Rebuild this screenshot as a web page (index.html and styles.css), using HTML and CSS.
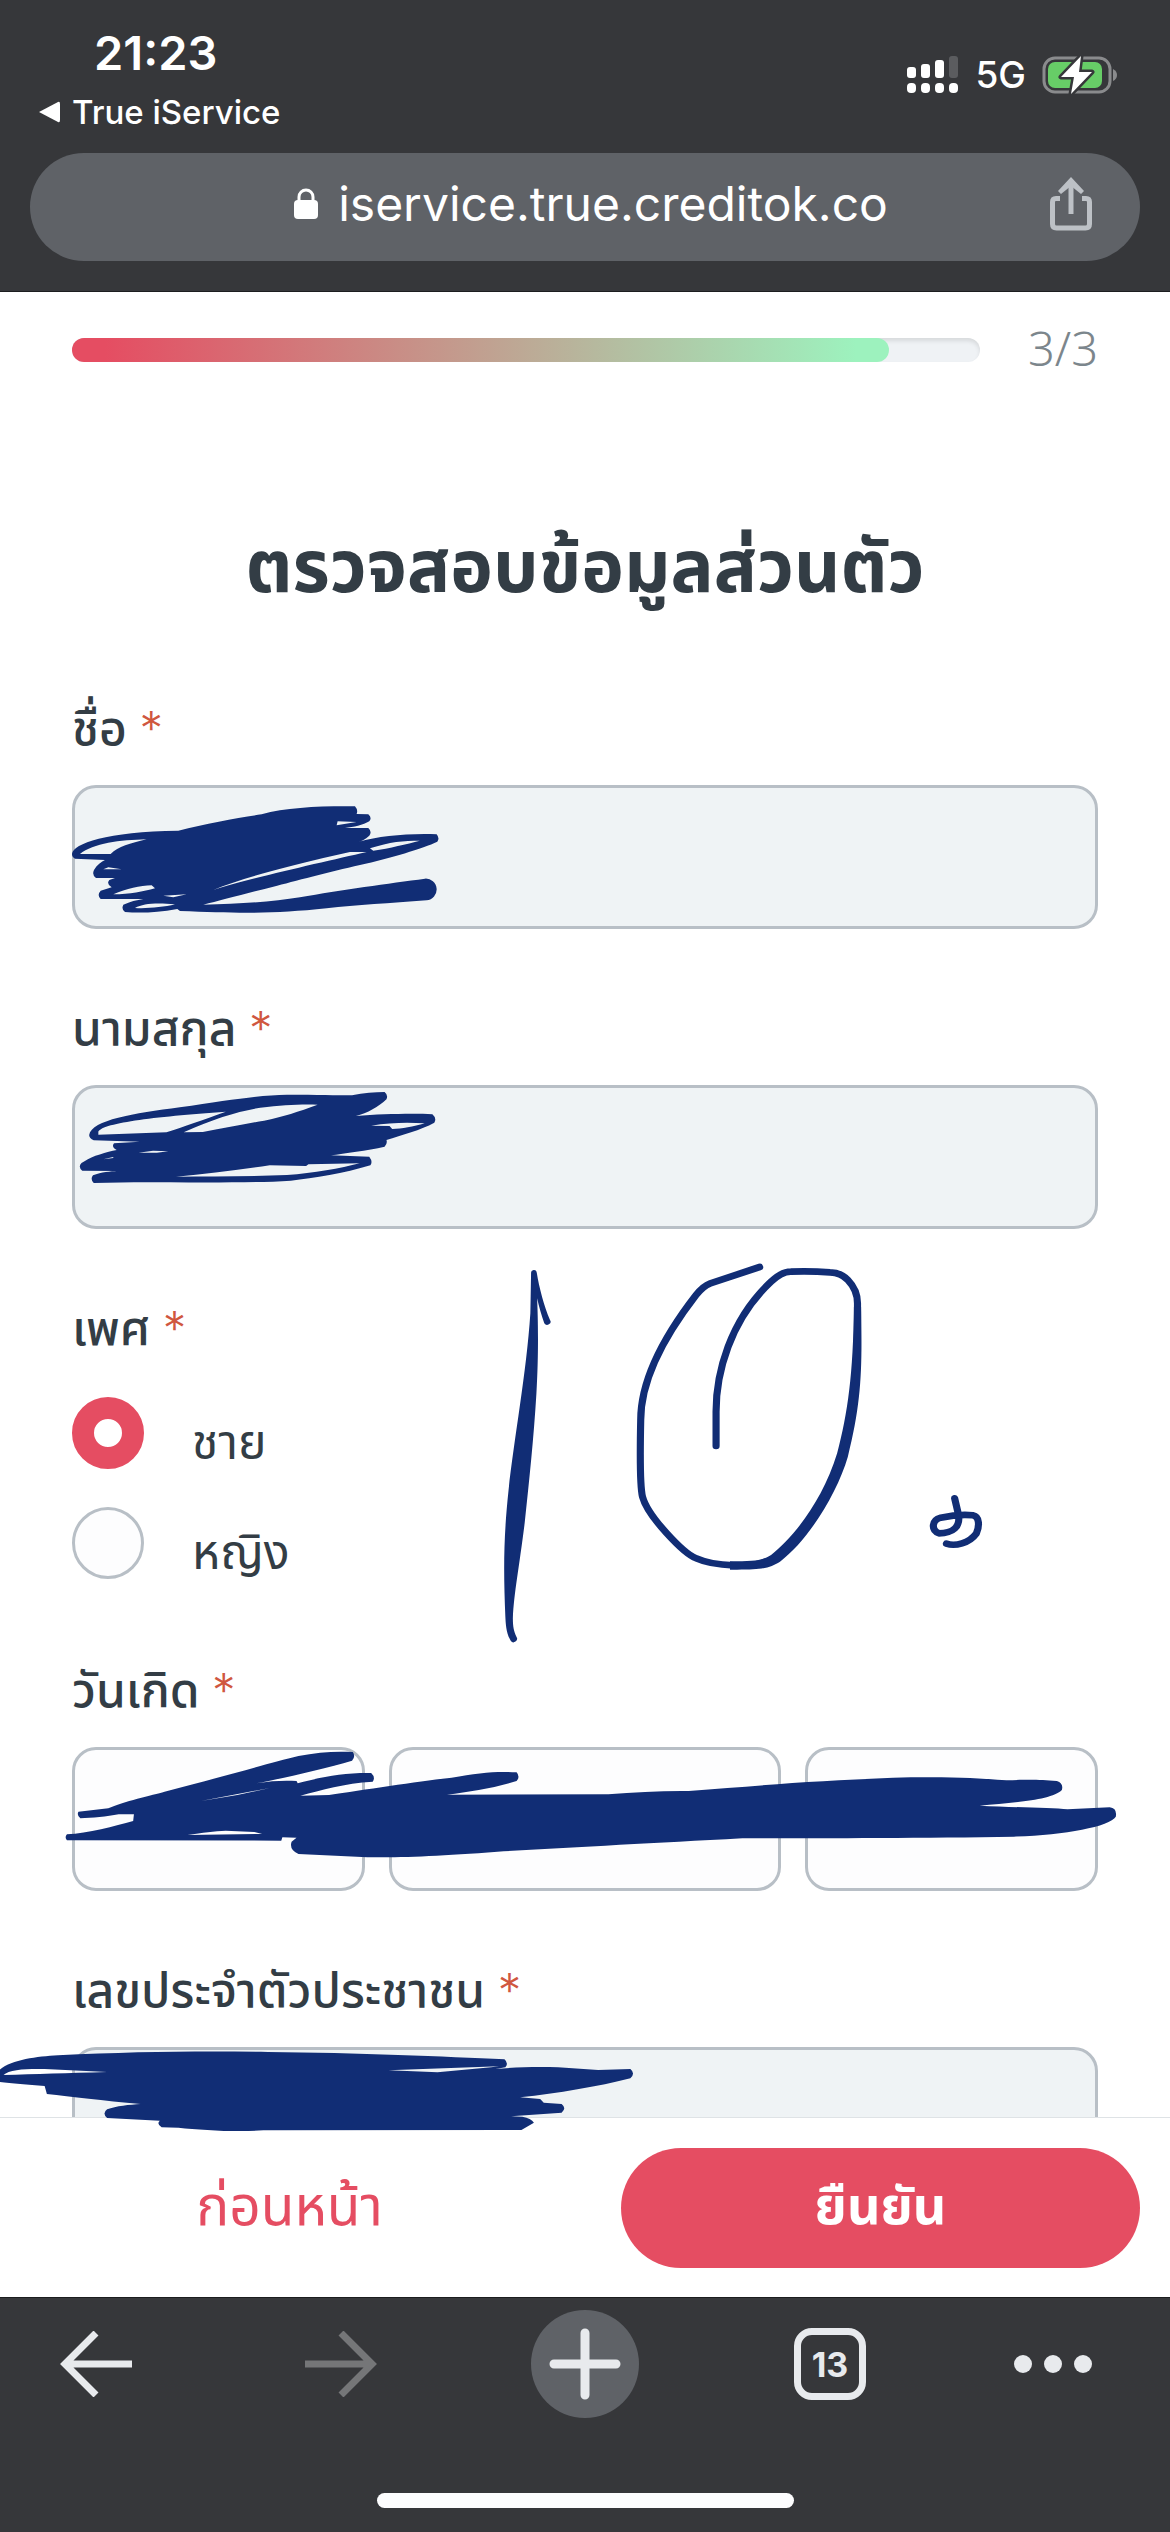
FILE: index.html
```html
<!DOCTYPE html>
<html lang="th">

<head>
  <meta charset="UTF-8" />
  <meta name="viewport" content="width=device-width, initial-scale=1" />
  <title>True iService</title>
  <link rel="stylesheet" href="styles.css">
</head>

<body>
  <header class="browser-top">
    <div class="status-bar">
      <div class="status-left">
        <span class="clock">21:23</span>
        <a class="back-app" href="#">
          <svg width="22" height="22" viewBox="0 0 22 22" aria-hidden="true">
            <path d="M1 11 20 1Q22 0 22 3V19Q22 22 20 21Z" fill="#fff" />
          </svg>
          True iService
        </a>
      </div>
      <div class="status-right">
        <svg width="52" height="38" viewBox="0 0 52 38" aria-hidden="true">
          <g fill="#fff">
            <rect x="0" y="11" width="9" height="11" rx="3" />
            <rect x="14" y="8" width="9" height="14" rx="3" />
            <rect x="28" y="4" width="9" height="18" rx="3" />
            <rect x="42" y="0" width="9" height="22" rx="3" fill="#5b5c5f" />
            <rect x="0" y="27" width="9" height="10" rx="4" />
            <rect x="14" y="27" width="9" height="10" rx="4" />
            <rect x="28" y="27" width="9" height="10" rx="4" />
            <rect x="42" y="27" width="9" height="10" rx="4" />
          </g>
        </svg>
        <span class="network">5G</span>
        <svg width="76" height="38" viewBox="0 0 76 38" aria-hidden="true">
          <rect x="2" y="2" width="66" height="34" rx="11" fill="none" stroke="#8a8b8d" stroke-width="3" />
          <rect x="6" y="6" width="54" height="26" rx="7" fill="#67cd67" />
          <path d="M71 13Q75 15 75 19T71 25Z" fill="#8a8b8d" />
          <path d="M39 0 19 21H32L29 38 50 16H37Z" fill="#fff" stroke="#36373a" stroke-width="5" stroke-linejoin="round" paint-order="stroke" />
        </svg>
      </div>
    </div>
    <div class="address-bar">
      <span class="address">
        <svg width="24" height="32" viewBox="0 0 24 32" aria-hidden="true">
          <path d="M5 14V9A7 7 0 0 1 19 9V14" fill="none" stroke="#fff" stroke-width="3" />
          <rect x="0" y="12" width="24" height="19" rx="4" fill="#fff" />
        </svg>
        iservice.true.creditok.co
      </span>
      <button class="share" type="button" aria-label="Share">
        <svg width="42" height="54" viewBox="0 0 42 54" fill="none" stroke="#bdc1c6" stroke-width="5">
          <path d="M10 21.500H6Q2.500 21.500 2.500 25V47Q2.500 51 6.500 51H35.500Q39.500 51 39.500 47V25Q39.500 21.500 36 21.500H32" />
          <path d="M21 37V5" />
          <path d="M21 0 34 14 31 17 21 9 11 17 8 14Z" fill="#bdc1c6" stroke="none" />
        </svg>
      </button>
    </div>
  </header>

  <main class="content">
    <div class="progress">
      <div class="progress-track">
        <div class="progress-fill" style="width: 90%"></div>
      </div>
      <span class="progress-count">3/3</span>
    </div>

    <h1>ตรวจสอบข้อมูลส่วนตัว</h1>

    <form id="profileForm">
      <div class="field">
        <label for="firstName">ชื่อ <span class="required">*</span></label>
        <input type="text" id="firstName" class="box" readonly />
      </div>

      <div class="field">
        <label for="lastName">นามสกุล <span class="required">*</span></label>
        <input type="text" id="lastName" class="box" readonly />
      </div>

      <fieldset class="field gender">
        <legend>เพศ <span class="required">*</span></legend>
        <label class="radio"><input type="radio" name="gender" checked /><span>ชาย</span></label>
        <label class="radio"><input type="radio" name="gender" /><span>หญิง</span></label>
      </fieldset>

      <fieldset class="field">
        <legend>วันเกิด <span class="required">*</span></legend>
        <div class="birthday">
          <select class="box" aria-label="วัน"><option></option></select>
          <select class="box" aria-label="เดือน"><option></option></select>
          <select class="box" aria-label="ปี"><option></option></select>
        </div>
      </fieldset>

      <div class="field">
        <label for="idCard">เลขประจำตัวประชาชน <span class="required">*</span></label>
        <input type="text" id="idCard" class="box" readonly />
      </div>
    </form>
  </main>

  <div class="actions">
    <button class="btn btn-back" type="button">ก่อนหน้า</button>
    <button class="btn btn-confirm" type="submit" form="profileForm">ยืนยัน</button>
  </div>

  <nav class="browser-bottom">
    <div class="toolbar">
      <button type="button" aria-label="Back">
        <svg width="72" height="66" viewBox="0 0 72 66" fill="none" stroke="#e8eaed" stroke-width="7">
          <path d="M72 33H8M36 2 5 33 36 64" />
        </svg>
      </button>
      <button type="button" aria-label="Forward">
        <svg width="72" height="66" viewBox="0 0 72 66" fill="none" stroke="#757678" stroke-width="7">
          <path d="M0 33H64M36 2 67 33 36 64" />
        </svg>
      </button>
      <button class="new-tab" type="button" aria-label="New tab">
        <svg width="72" height="72" viewBox="0 0 72 72" fill="none" stroke="#e8eaed" stroke-width="9" stroke-linecap="round">
          <path d="M36 5V67M5 36H67" />
        </svg>
      </button>
      <button class="tabs" type="button">13</button>
      <button type="button" aria-label="More">
        <svg width="78" height="18" viewBox="0 0 78 18" fill="#e8eaed">
          <circle cx="9" cy="9" r="9" />
          <circle cx="39" cy="9" r="9" />
          <circle cx="69" cy="9" r="9" />
        </svg>
      </button>
    </div>
    <div class="home-indicator"></div>
  </nav>

  <!-- Pen marks over the page -->
  <svg class="ink" viewBox="0 0 1170 2532" fill-rule="evenodd" aria-hidden="true">
    <!-- first name -->
    <g transform="translate(40 780) scale(.3333)">
      <path d="M96 222C100 190 200 155 415 152C500 130 600 112 665 103C740 82 840 78 945 79Q955 90 950 102L985 103Q997 113 988 124C970 135 940 142 915 144L985 144Q997 155 988 167C975 178 965 183 955 186C1020 168 1100 160 1190 163Q1200 175 1192 185C1150 205 1050 235 960 255C870 275 760 305 700 320C620 340 540 362 490 374C600 372 700 365 780 352C900 330 1050 310 1155 296A32 32 0 0 1 1160 361C1050 370 950 375 860 385C700 402 600 400 420 393L412 387C350 398 300 400 255 396Q243 388 250 374C270 365 290 360 310 357L182 357Q170 345 182 332L215 322Q198 312 208 300L225 294L168 294Q155 285 162 270C170 255 185 245 195 240L105 236Q96 232 96 222Z
        M120 222C160 190 240 180 320 178C270 190 235 200 212 222Z
        M205 262L245 268L190 268Z
        M220 343C260 325 300 318 335 316L345 325C310 335 270 343 220 343Z
        M285 384C310 372 340 368 405 373C370 382 320 386 285 384Z
        M893 124L950 126L890 136Z
        M990 205C1050 185 1090 182 1140 182C1100 192 1050 205 1000 212Z
        M520 330C600 297 720 265 850 234L930 216L980 216C860 244 640 292 520 330Z
        M370 347L440 343L400 352Z" />
    </g>
    <!-- last name -->
    <g transform="translate(0 980) scale(.38265 .3333)">
      <path d="M233 465C240 420 350 400 470 382C600 360 680 345 750 344C830 344 880 346 920 346C950 338 980 336 1005 336Q1015 345 1010 358C990 380 960 400 930 408C1000 402 1080 400 1130 403Q1142 415 1135 428C1100 450 1050 465 1010 480Q1013 492 1005 500C960 512 900 520 865 526L965 530Q975 545 968 556C900 580 820 595 760 602C650 610 500 607 350 607L245 609Q235 598 243 586C265 576 290 574 305 573L215 572Q203 560 213 549L222 543C240 528 280 516 305 510Q290 500 298 490L365 485L245 481Q233 475 233 465Z
        M257 457C260 430 400 410 590 395C530 420 480 440 435 457L257 464Z
        M480 457C560 415 620 395 680 383C740 376 780 372 830 374C780 395 740 410 690 422C640 432 580 445 530 456Z
        M970 437C1020 428 1060 427 1110 430C1080 440 1050 447 1025 447L1018 438Z
        M362 518L400 512L440 514L410 518Z
        M270 538L296 531L296 534Z
        M460 590C540 582 620 570 705 556L800 558L806 553L940 550C890 565 820 580 750 585C650 590 550 588 460 590Z" />
    </g>
    <!-- one, zero, tail -->
    <g transform="translate(480 1240) scale(.35714 .3333)">
      <path d="M143 100A8 9 0 0 1 159 98C165 140 180 200 196 240A9 9 0 0 1 180 250C172 225 165 200 160 175C162 230 165 330 158 460C150 600 138 720 125 850C110 980 95 1060 92 1135C92 1160 95 1175 102 1190A9 10 0 0 1 86 1202C73 1180 72 1150 71 1130C66 1000 65 900 80 750C95 600 130 400 141 220Z" />
      <path class="stroke" d="M783 81L645 130Q625 138 605 165C500 310 450 430 450 540C448 640 448 740 455 770C470 830 570 940 605 955C640 972 680 975 710 976C770 976 800 972 830 950C900 890 990 760 1020 620C1060 430 1057 300 1057 190Q1057 150 1030 120Q1010 97 980 97C940 94 900 94 870 95Q845 95 815 125C700 240 660 400 661 520L661 618" />
      <path d="M700 989C790 990 810 985 840 965C920 900 1000 760 1030 650C1070 480 1070 380 1067 200L1047 200C1045 400 1030 520 1000 640C960 780 880 890 815 945C790 962 770 963 700 964Z" />
      <path class="stroke" d="M1329 775L1340 825C1345 860 1325 880 1285 880C1262 870 1265 840 1290 833C1330 824 1360 824 1380 826C1400 830 1398 860 1390 880C1370 910 1330 920 1306 911" />
    </g>
    <!-- birthday -->
    <g transform="translate(0 1720) scale(.38265 .3333)">
      <path d="M175 343C230 340 300 318 348 303L350 283L310 283C280 290 240 294 210 295Q200 285 205 275L283 265C320 245 400 225 430 215C600 165 700 130 780 108C830 96 880 93 922 96Q930 110 920 122C850 145 740 175 670 190C710 182 745 181 775 183L778 190C850 168 900 158 970 159Q982 172 974 185C900 190 840 210 785 227L860 225C950 210 1100 183 1180 173C1250 158 1300 153 1350 157Q1360 170 1350 183C1290 205 1230 215 1168 224L1590 223C1660 217 1730 212 1800 213C2000 195 2150 180 2380 172C2500 170 2560 175 2630 181C2700 178 2720 180 2762 183Q2780 190 2775 210C2750 240 2650 248 2560 257C2650 262 2750 264 2790 268L2900 262Q2920 265 2916 290C2900 320 2780 345 2650 350C2400 355 2100 354 1940 355C1700 370 1500 382 1300 395C1150 408 1050 413 960 412L780 402Q755 390 762 365L775 353L738 352L735 362L175 361Q168 352 175 343Z
        M490 345C530 338 560 333 590 332L665 336L685 342Z
        M525 243L705 204L620 225Z" />
    </g>
    <!-- id card -->
    <g transform="translate(0 1940) scale(.44643 .3333)">
      <path d="M-5 395C20 360 80 350 130 346C300 335 450 333 600 336C800 338 1000 350 1130 358Q1140 370 1132 382L1110 387C1150 382 1200 380 1250 382L1340 390L1412 387Q1424 400 1412 415C1340 440 1250 460 1165 472L1210 477L1218 488L1258 492Q1270 505 1258 518L1145 529L1170 530Q1190 535 1196 548L1168 570L590 571C530 577 450 570 400 563L362 562Q350 552 358 542L240 534Q228 520 240 508C260 498 290 494 315 492C230 482 160 470 105 462L100 438C60 434 20 430 -5 425Z
        M8 405C20 388 60 386 100 387L240 396C150 399 80 402 8 405Z
        M870 391L1118 379L1100 382L980 397Z" />
    </g>
  </svg>
</body>

</html>
```
FILE: styles.css
```css
* {
  margin: 0;
  padding: 0;
  box-sizing: border-box;
}

body {
  position: relative;
  display: flex;
  flex-direction: column;
  height: 100vh;
  overflow: hidden;
  background: #fff;
  color: #333d45;
  font-family: "Noto Sans Thai", "Noto Sans", sans-serif;
}

button {
  border: none;
  background: none;
  font-family: inherit;
  cursor: pointer;
}

svg {
  display: block;
}

/* Browser chrome */
.browser-top {
  flex: none;
  padding: 24px 30px 30px;
  background: #36373a;
  border-bottom: 1px solid #1c1d1f;
  color: #fff;
  font-family: Inter, sans-serif;
}

.status-bar {
  display: flex;
  justify-content: space-between;
  padding: 0 22px 0 8px;
}

.status-left {
  height: 129px;
}

.clock {
  display: block;
  padding-left: 56px;
  font-size: 47px;
  line-height: 58px;
  font-weight: 600;
}

.back-app {
  display: flex;
  align-items: center;
  gap: 12px;
  color: #fff;
  font-size: 33px;
  line-height: 60px;
  font-weight: 500;
  text-decoration: none;
}

.status-right {
  display: flex;
  align-items: center;
  gap: 16px;
  height: 102px;
}

.network {
  font-size: 37px;
  line-height: 40px;
  font-weight: 500;
}

.address-bar {
  display: flex;
  align-items: center;
  justify-content: center;
  position: relative;
  height: 108px;
  padding: 0 0 6px 12px;
  border-radius: 54px;
  background: #5f6267;
}

.address {
  display: flex;
  align-items: center;
  gap: 20px;
  font-size: 48px;
  line-height: 56px;
}

.share {
  position: absolute;
  right: 48px;
}

/* Page */
.content {
  flex: 1;
  min-height: 0;
  padding: 28px 72px 0;
  overflow: auto;
  scrollbar-width: none;
}

.progress {
  display: flex;
  align-items: center;
  gap: 48px;
}

.progress-track {
  flex: 1;
  height: 24px;
  border-radius: 12px;
  background: #eff2f5;
  box-shadow: inset 0 3px 4px rgba(0, 0, 0, 0.1);
}

.progress-fill {
  height: 100%;
  border-radius: 12px;
  background: linear-gradient(to right, #e54d62 4%, #9df2be 96%);
}

.progress-count {
  padding-top: 4px;
  color: #7c868c;
  font-size: 47px;
  line-height: 56px;
  font-weight: 300;
}

h1 {
  margin-top: 136px;
  text-align: center;
  font-size: 72px;
  line-height: 108px;
  font-weight: 700;
}

form {
  padding-top: 77px;
}

.field {
  border: none;
  margin-bottom: 72px;
}

.field > label:not(.radio),
.field > legend {
  display: block;
  margin-bottom: 24px;
  font-size: 48px;
  line-height: 60px;
  font-weight: 500;
}

.required {
  color: #d0573f;
  font-family: Inter, sans-serif;
  font-size: 47px;
  line-height: 48px;
  font-weight: 300;
}

.box {
  display: block;
  width: 100%;
  height: 144px;
  padding: 0 36px;
  border: 3px solid #b8bfc6;
  border-radius: 24px;
  background: #eff3f5;
  color: inherit;
  font: inherit;
  font-size: 48px;
  appearance: none;
}

.gender {
  padding: 12px 0;
}

.radio {
  display: flex;
  align-items: center;
  gap: 48px;
  height: 72px;
  font-size: 48px;
  line-height: 60px;
}

.radio + .radio {
  margin-top: 38px;
}

.radio span {
  padding-top: 24px;
}

.radio input {
  width: 72px;
  height: 72px;
  border: 3px solid #b8bfc6;
  border-radius: 50%;
  background: #fdfdfe;
  appearance: none;
}

.radio input:checked {
  border: 22px solid #e54d62;
  background: #fff;
}

.birthday {
  display: grid;
  grid-template-columns: 3fr 4fr 3fr;
  gap: 24px;
}

.birthday .box {
  background: #fdfdfe;
}

.actions {
  flex: none;
  display: flex;
  gap: 72px;
  padding: 30px 30px 29px;
  border-top: 1px solid #dfe3e6;
  background: #fff;
}

.btn {
  flex: 1;
  height: 120px;
  border-radius: 60px;
  font-size: 52px;
}

.btn-back {
  color: #e54d62;
  font-size: 55px;
}

.btn-confirm {
  background: #e54d62;
  color: #fff;
  font-weight: 700;
}

/* Browser toolbar */
.browser-bottom {
  flex: none;
  padding: 12px 0 24px;
  background: #36373a;
  border-top: 1px solid #1c1d1f;
}

.toolbar {
  display: grid;
  grid-template-columns: 245fr 226fr 263fr 220fr 78px;
  align-items: center;
  justify-items: start;
  height: 108px;
  padding: 0 78px 0 60px;
}

.new-tab {
  display: flex;
  align-items: center;
  justify-content: center;
  width: 108px;
  height: 108px;
  border-radius: 50%;
  background: #5f6267;
}

.tabs {
  width: 72px;
  height: 72px;
  border: 7px solid #e8eaed;
  border-radius: 18px;
  color: #e8eaed;
  font-family: Inter, sans-serif;
  font-size: 34px;
  font-weight: 700;
}

.home-indicator {
  width: 417px;
  height: 15px;
  margin: 75px auto 0;
  border-radius: 8px;
  background: #fdfdfe;
}

/* Pen marks */
.ink {
  position: absolute;
  top: 0;
  left: 0;
  width: 100%;
  fill: #112d75;
  pointer-events: none;
}

.ink .stroke {
  fill: none;
  stroke: #112d75;
  stroke-width: 20;
  stroke-linecap: round;
  stroke-linejoin: round;
}
```
